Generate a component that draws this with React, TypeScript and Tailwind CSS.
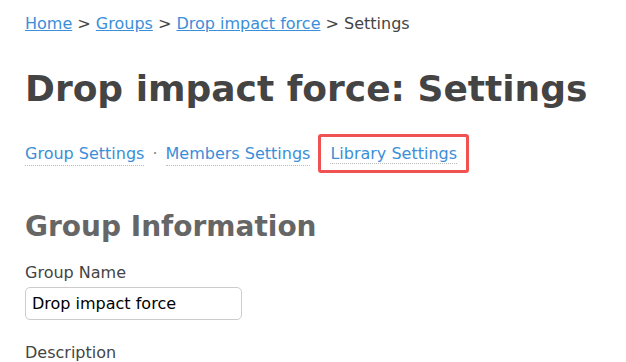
import React from 'react';

const App: React.FC = () => {
  return (
    <div className="bg-white min-h-screen px-[25px] pt-[12px] text-[#444] font-['DejaVu_Sans',Verdana,sans-serif]">
      <nav className="text-[16px] leading-[24px]">
        <a href="#" className="text-[#3b8ed8] underline">Home</a>
        <span> &gt; </span>
        <a href="#" className="text-[#3b8ed8] underline">Groups</a>
        <span> &gt; </span>
        <a href="#" className="text-[#3b8ed8] underline">Drop impact force</a>
        <span> &gt; Settings</span>
      </nav>
      <h1 className="mt-[31px] text-[36px] leading-[44px] font-bold text-[#444]">Drop impact force: Settings</h1>
      <div className="mt-[23px] flex items-center text-[16px] leading-[23px]">
        <a href="#" className="text-[#3b8ed8] border-b border-dotted border-[#bbb]">Group Settings</a>
        <span className="mx-[8px] text-[#888]">·</span>
        <a href="#" className="text-[#3b8ed8] border-b border-dotted border-[#bbb]">Members Settings</a>
        <div className="ml-[8px] px-[9px] py-[5px] border-[3px] border-[#f05252] rounded-[3px]">
          <a href="#" className="text-[#3b8ed8] border-b border-dotted border-[#bbb]">Library Settings</a>
        </div>
      </div>
      <h2 className="mt-[36px] text-[28px] leading-[36px] font-bold text-[#666]">Group Information</h2>
      <label className="block mt-[18px] text-[16px] leading-[20px]">Group Name</label>
      <input
        defaultValue="Drop impact force"
        className="mt-[4px] w-[217px] h-[33px] px-[6px] border border-[#ccc] rounded-[5px] text-[16px] text-black"
      />
      <label className="block mt-[23px] text-[16px] leading-[20px]">Description</label>
    </div>
  );
};

export default App;
